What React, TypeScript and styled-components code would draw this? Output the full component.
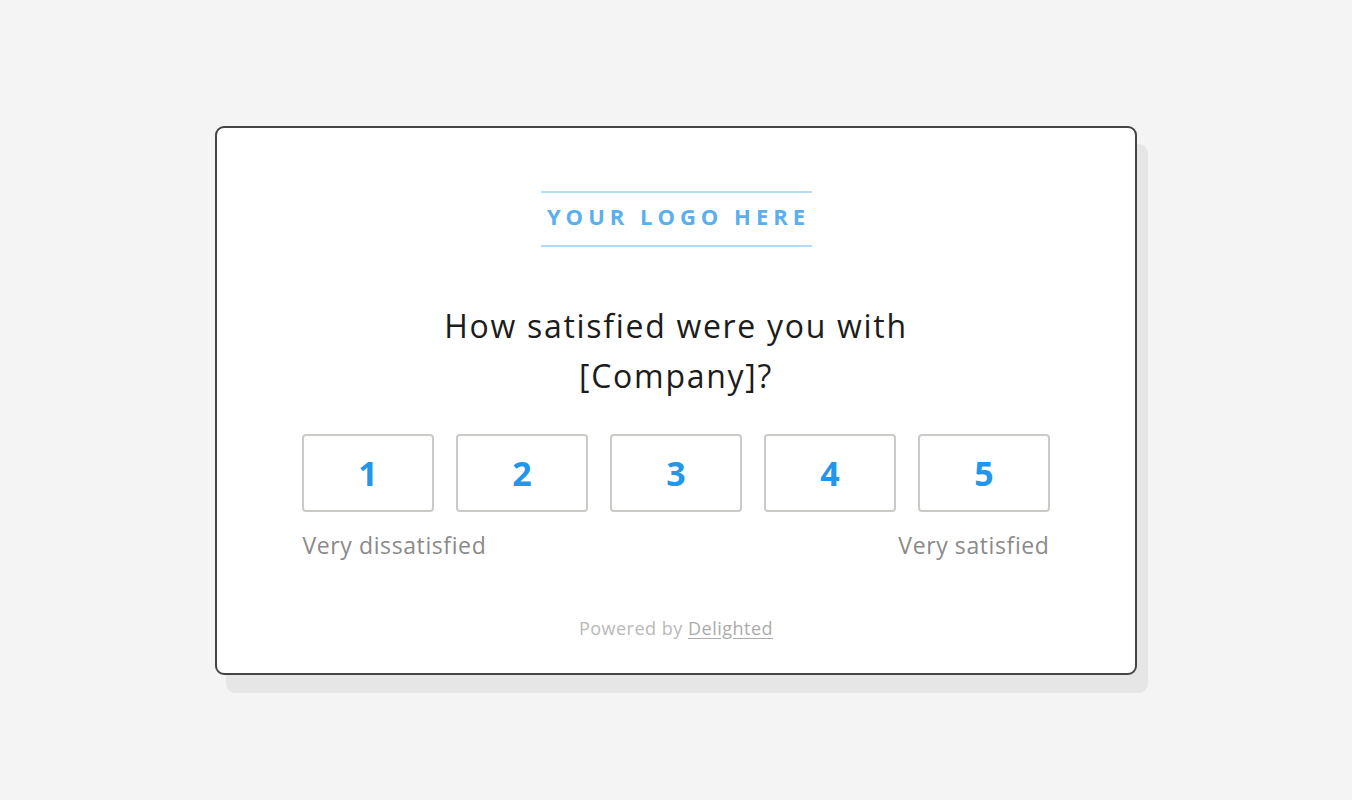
import React from "react";
import styled, { createGlobalStyle } from "styled-components";

const Global = createGlobalStyle`
  html, body { margin: 0; padding: 0; background: #f4f4f4; }
  body { font-family: "Open Sans", Lato, Arial, sans-serif; }
`;

const Page = styled.div`
  width: 1352px;
  height: 800px;
  display: flex;
  align-items: center;
  justify-content: center;
  background: #f4f4f4;
`;

const Card = styled.div`
  box-sizing: border-box;
  width: 922px;
  height: 549px;
  background: #ffffff;
  border: 2px solid #454545;
  border-radius: 9px;
  box-shadow: 11px 18px 0 #e6e6e6;
  display: flex;
  flex-direction: column;
  align-items: center;
  padding-top: 63px;
`;

const Logo = styled.div`
  box-sizing: border-box;
  width: 271px;
  height: 56px;
  border-top: 2px solid #b3dbf6;
  border-bottom: 2px solid #b3dbf6;
  display: flex;
  align-items: center;
  justify-content: center;
  color: #5aafee;
  font-family: "Open Sans", sans-serif;
  font-weight: 700;
  font-size: 22px;
  letter-spacing: 5px;
  padding: 0 0 6px 5px;
`;

const Question = styled.h1`
  margin: 54px 0 0;
  width: 560px;
  text-align: center;
  font-family: "Open Sans", sans-serif;
  font-weight: 400;
  font-size: 32px;
  letter-spacing: 1.7px;
  line-height: 50px;
  color: #1c1c1c;
`;

const Scale = styled.div`
  margin-top: 33px;
  display: flex;
  gap: 22px;
`;

const ScoreButton = styled.button`
  box-sizing: border-box;
  width: 132px;
  height: 78px;
  background: #fff;
  border: 2px solid #cbcac7;
  border-radius: 4px;
  color: #2196ea;
  font-family: "Open Sans", sans-serif;
  font-weight: 700;
  font-size: 34px;
  cursor: pointer;
  padding: 0;
`;

const Labels = styled.div`
  margin-top: 20px;
  width: 747px;
  display: flex;
  justify-content: space-between;
  font-family: "Open Sans", sans-serif;
  font-size: 23px;
  letter-spacing: 0.6px;
  line-height: 26px;
  color: #8a8a8a;
`;

const Footer = styled.div`
  margin-top: 59px;
  font-family: "Open Sans", sans-serif;
  font-size: 18px;
  letter-spacing: 0.5px;
  line-height: 22px;
  color: #b9b9b9;
`;

const FooterLink = styled.a`
  color: #ababab;
  text-decoration: underline;
  text-underline-offset: 3px;
`;

export default function App() {
  return (
    <Page>
      <Global />
      <Card>
        <Logo>YOUR LOGO HERE</Logo>
        <Question>How satisfied were you with [Company]?</Question>
        <Scale>
          {[1, 2, 3, 4, 5].map((n) => (
            <ScoreButton key={n}>{n}</ScoreButton>
          ))}
        </Scale>
        <Labels>
          <span>Very dissatisfied</span>
          <span>Very satisfied</span>
        </Labels>
        <Footer>
          Powered by <FooterLink href="#">Delighted</FooterLink>
        </Footer>
      </Card>
    </Page>
  );
}
